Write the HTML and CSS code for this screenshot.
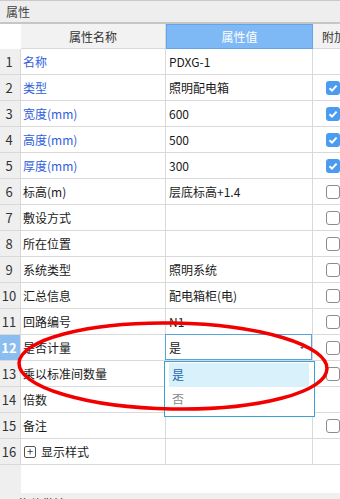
FILE: index.html
```html
<!DOCTYPE html>
<html lang="zh">
<head>
<meta charset="utf-8">
<title>属性</title>
<link rel="stylesheet" href="styles.css">
</head>
<body>
<div class="page">
  <div class="title">属性</div>
  <div class="grid">
    <div class="c hnum"></div>
    <div class="c h">属性名称</div>
    <div class="c h hsel">属性值</div>
    <div class="c h hx">附加</div>

    <div class="c num">1</div><div class="c name blue">名称</div><div class="c val">PDXG-1</div><div class="c chk"></div>
    <div class="c num">2</div><div class="c name blue">类型</div><div class="c val">照明配电箱</div><div class="c chk"><span class="cb on"><svg viewBox="0 0 14 14" width="14" height="14"><path d="M3.5 7.2 L6 9.6 L10.6 4.6" fill="none" stroke="#fff" stroke-width="2"/></svg></span></div>
    <div class="c num">3</div><div class="c name blue">宽度(mm)</div><div class="c val">600</div><div class="c chk"><span class="cb on"><svg viewBox="0 0 14 14" width="14" height="14"><path d="M3.5 7.2 L6 9.6 L10.6 4.6" fill="none" stroke="#fff" stroke-width="2"/></svg></span></div>
    <div class="c num">4</div><div class="c name blue">高度(mm)</div><div class="c val">500</div><div class="c chk"><span class="cb on"><svg viewBox="0 0 14 14" width="14" height="14"><path d="M3.5 7.2 L6 9.6 L10.6 4.6" fill="none" stroke="#fff" stroke-width="2"/></svg></span></div>
    <div class="c num">5</div><div class="c name blue">厚度(mm)</div><div class="c val">300</div><div class="c chk"><span class="cb on"><svg viewBox="0 0 14 14" width="14" height="14"><path d="M3.5 7.2 L6 9.6 L10.6 4.6" fill="none" stroke="#fff" stroke-width="2"/></svg></span></div>
    <div class="c num">6</div><div class="c name">标高(m)</div><div class="c val">层底标高+1.4</div><div class="c chk"><span class="cb"></span></div>
    <div class="c num">7</div><div class="c name">敷设方式</div><div class="c val"></div><div class="c chk"><span class="cb"></span></div>
    <div class="c num">8</div><div class="c name">所在位置</div><div class="c val"></div><div class="c chk"><span class="cb"></span></div>
    <div class="c num">9</div><div class="c name">系统类型</div><div class="c val">照明系统</div><div class="c chk"><span class="cb"></span></div>
    <div class="c num">10</div><div class="c name">汇总信息</div><div class="c val">配电箱柜(电)</div><div class="c chk"><span class="cb"></span></div>
    <div class="c num">11</div><div class="c name">回路编号</div><div class="c val">N1</div><div class="c chk"><span class="cb"></span></div>
    <div class="c num sel">12</div><div class="c name">是否计量</div><div class="c val edit">是<span class="arrow"></span>
      <div class="dropdown">
        <div class="opt active">是</div>
        <div class="opt">否</div>
      </div>
    </div><div class="c chk"><span class="cb"></span></div>
    <div class="c num">13</div><div class="c name">乘以标准间数量</div><div class="c val"></div><div class="c chk"><span class="cb"></span></div>
    <div class="c num">14</div><div class="c name">倍数</div><div class="c val"></div><div class="c chk"></div>
    <div class="c num">15</div><div class="c name">备注</div><div class="c val"></div><div class="c chk"><span class="cb"></span></div>
    <div class="c num">16</div><div class="c name"><span class="plus">+</span>显示样式</div><div class="c val"></div><div class="c chk"></div>

    <div class="f fnum"></div><div class="f frest"></div>
  </div>
  <div class="bottom"><span class="btitle">构件做法</span></div>

  <svg class="mark" viewBox="0 0 340 499" width="340" height="499">
    <ellipse cx="173" cy="366" rx="154" ry="43" transform="rotate(1 173 366)" fill="none" stroke="#f20000" stroke-width="3.5"/>
  </svg>
</div>
</body>
</html>
```

FILE: styles.css
```css
html, body {
  margin: 0;
  padding: 0;
  background: #ffffff;
}
body {
  font-family: "Noto Sans CJK SC", "Noto Sans", sans-serif;
  font-size: 12px;
  color: #1a1a1a;
}
.page {
  position: relative;
  width: 340px;
  height: 499px;
  overflow: hidden;
}
.title {
  height: 21px;
  border-top: 1px solid #c9c9c9;
  border-bottom: 2px solid #c6c6c6;
  background: #eeeeee;
  color: #444;
  padding-left: 6px;
  line-height: 21px;
  font-size: 12px;
}
.grid {
  display: grid;
  grid-template-columns: 21px 145px 147px 80px;
  grid-auto-rows: 26px;
  grid-template-rows: 25px;
  width: 393px;
}
.c {
  box-sizing: border-box;
  border-right: 1px solid #d9d9d9;
  border-bottom: 1px solid #d9d9d9;
  display: flex;
  align-items: center;
  white-space: nowrap;
  position: relative;
}
.hnum {
  background: #ffffff;
  border-right: none;
  border-bottom: none;
}
.h {
  background: #f2f2f2;
  justify-content: center;
  color: #333;
}
.hsel {
  background: #7fb9f5;
  color: #ffffff;
  border: 1px solid #63a5ec;
}
.hx {
  justify-content: flex-start;
  padding-left: 9px;
}
.num {
  background: #efefef;
  justify-content: center;
  padding-right: 2px;
  color: #333;
  font-size: 13px;
}
.num.sel {
  background: #8bbdf0;
  color: #ffffff;
  font-weight: bold;
}
.name {
  padding-left: 2px;
}
.blue {
  color: #2f60dc;
}
.val {
  padding-left: 3px;
}
.chk {
  padding-left: 13px;
}
.cb {
  box-sizing: border-box;
  width: 14px;
  height: 14px;
  border: 1px solid #8c8c8c;
  border-radius: 3px;
  background: #fff;
  display: block;
}
.cb.on {
  border: none;
  background: #4b9cf1;
}
.cb svg {
  display: block;
}
.edit::after {
  content: "";
  position: absolute;
  top: -1px;
  left: -1px;
  right: 0;
  bottom: 0;
  border: 1px solid #55a5dc;
  pointer-events: none;
}
.arrow {
  position: absolute;
  right: 8px;
  top: 12px;
  width: 0;
  height: 0;
  border-left: 2px solid transparent;
  border-right: 2px solid transparent;
  border-top: 2px solid #555;
}
.dropdown {
  position: absolute;
  top: 26px;
  left: -2px;
  width: 151px;
  height: 56px;
  box-sizing: border-box;
  border: 1px solid #3ba0d6;
  background: #ffffff;
  padding: 1px 5px 0 4px;
  z-index: 2;
}
.opt {
  height: 24px;
  line-height: 24px;
  padding-left: 3px;
  color: #8a8a8a;
}
.opt.active {
  background: #d9f1fa;
  color: #1f66b0;
}
.plus {
  box-sizing: border-box;
  display: inline-flex;
  align-items: center;
  justify-content: center;
  width: 12px;
  height: 12px;
  border: 1px solid #555;
  border-radius: 2px;
  font-size: 11px;
  line-height: 1;
  margin-left: 1px;
  margin-right: 5px;
  color: #333;
}
.f {
  height: 28px;
}
.fnum {
  background: #efefef;
}
.frest {
  grid-column: 2 / 5;
  background: #ffffff;
}
.bottom {
  height: 20px;
  border-top: 1px solid #c6c6c6;
  background: #efefef;
  padding-left: 18px;
  padding-top: 3px;
  color: #222;
}
.btitle {
  font-size: 12px;
}
.mark {
  position: absolute;
  top: 0;
  left: 0;
  pointer-events: none;
  z-index: 5;
}
```
